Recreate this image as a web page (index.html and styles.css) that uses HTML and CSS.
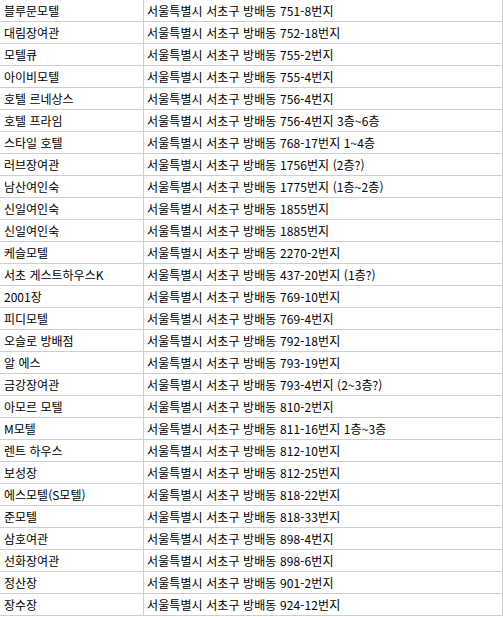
FILE: index.html
```html
<!DOCTYPE html>
<html lang="ko">
<head>
<meta charset="utf-8">
<title>방배동 숙박업소</title>
<link rel="stylesheet" href="styles.css">
</head>
<body>
<table class="list">
<tbody>
<tr><td class="name">블루문모텔</td><td class="addr">서울특별시 서초구 방배동 751-8번지</td></tr>
<tr><td class="name">대림장여관</td><td class="addr">서울특별시 서초구 방배동 752-18번지</td></tr>
<tr><td class="name">모텔큐</td><td class="addr">서울특별시 서초구 방배동 755-2번지</td></tr>
<tr><td class="name">아이비모텔</td><td class="addr">서울특별시 서초구 방배동 755-4번지</td></tr>
<tr><td class="name">호텔 르네상스</td><td class="addr">서울특별시 서초구 방배동 756-4번지</td></tr>
<tr><td class="name">호텔 프라임</td><td class="addr">서울특별시 서초구 방배동 756-4번지 3층~6층</td></tr>
<tr><td class="name">스타일 호텔</td><td class="addr">서울특별시 서초구 방배동 768-17번지 1~4층</td></tr>
<tr><td class="name">러브장여관</td><td class="addr">서울특별시 서초구 방배동 1756번지 (2층?)</td></tr>
<tr><td class="name">남산여인숙</td><td class="addr">서울특별시 서초구 방배동 1775번지 (1층~2층)</td></tr>
<tr><td class="name">신일여인숙</td><td class="addr">서울특별시 서초구 방배동 1855번지</td></tr>
<tr><td class="name">신일여인숙</td><td class="addr">서울특별시 서초구 방배동 1885번지</td></tr>
<tr><td class="name">케슬모텔</td><td class="addr">서울특별시 서초구 방배동 2270-2번지</td></tr>
<tr><td class="name">서초 게스트하우스K</td><td class="addr">서울특별시 서초구 방배동 437-20번지 (1층?)</td></tr>
<tr><td class="name">2001장</td><td class="addr">서울특별시 서초구 방배동 769-10번지</td></tr>
<tr><td class="name">피디모텔</td><td class="addr">서울특별시 서초구 방배동 769-4번지</td></tr>
<tr><td class="name">오슬로 방배점</td><td class="addr">서울특별시 서초구 방배동 792-18번지</td></tr>
<tr><td class="name">알 에스</td><td class="addr">서울특별시 서초구 방배동 793-19번지</td></tr>
<tr><td class="name">금강장여관</td><td class="addr">서울특별시 서초구 방배동 793-4번지 (2~3층?)</td></tr>
<tr><td class="name">아모르 모텔</td><td class="addr">서울특별시 서초구 방배동 810-2번지</td></tr>
<tr><td class="name">M모텔</td><td class="addr">서울특별시 서초구 방배동 811-16번지 1층~3층</td></tr>
<tr><td class="name">렌트 하우스</td><td class="addr">서울특별시 서초구 방배동 812-10번지</td></tr>
<tr><td class="name">보성장</td><td class="addr">서울특별시 서초구 방배동 812-25번지</td></tr>
<tr><td class="name">에스모텔(S모텔)</td><td class="addr">서울특별시 서초구 방배동 818-22번지</td></tr>
<tr><td class="name">준모텔</td><td class="addr">서울특별시 서초구 방배동 818-33번지</td></tr>
<tr><td class="name">삼호여관</td><td class="addr">서울특별시 서초구 방배동 898-4번지</td></tr>
<tr><td class="name">선화장여관</td><td class="addr">서울특별시 서초구 방배동 898-6번지</td></tr>
<tr><td class="name">정산장</td><td class="addr">서울특별시 서초구 방배동 901-2번지</td></tr>
<tr><td class="name">장수장</td><td class="addr">서울특별시 서초구 방배동 924-12번지</td></tr>
</tbody>
</table>
</body>
</html>
```
FILE: styles.css
```css
html, body {
  margin: 0;
  padding: 0;
  background: #ffffff;
}

body {
  font-family: "Noto Sans CJK KR", "Noto Sans", sans-serif;
  font-size: 12px;
  color: #000000;
}

.list {
  border-collapse: separate;
  border-spacing: 0;
  table-layout: fixed;
  width: 503px;
}

.list td {
  height: 22px;
  padding: 0 0 0 3px;
  line-height: 21px;
  border-bottom: 1px solid #cfcfcf;
  border-right: 1px solid #cfcfcf;
  white-space: nowrap;
  overflow: hidden;
  vertical-align: middle;
  box-sizing: border-box;
}

.list td.name {
  width: 144px;
  padding-left: 4px;
}

.list td.addr {
  width: 359px;
  padding-left: 3px;
  letter-spacing: 0.1px;
}
```
